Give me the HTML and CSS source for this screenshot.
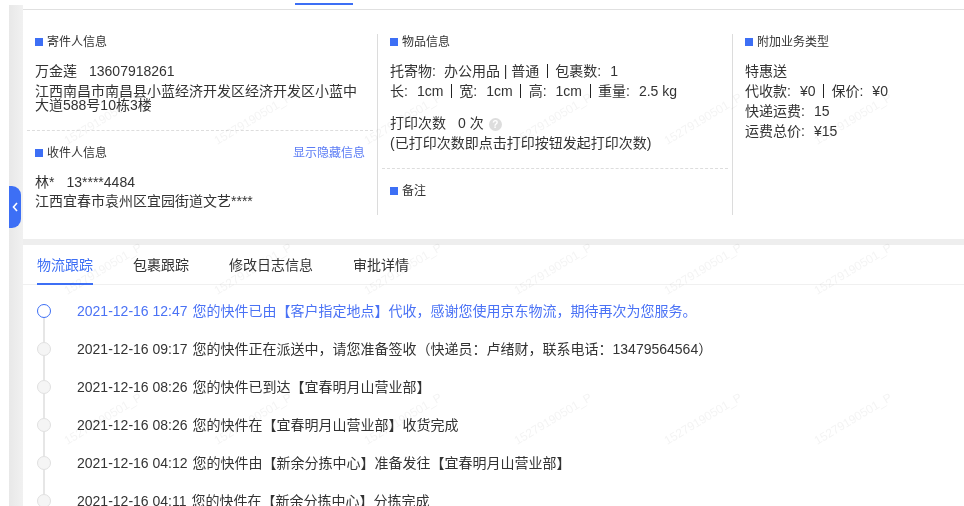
FILE: index.html
```html
<!DOCTYPE html>
<html lang="zh-CN">
<head>
    <meta charset="UTF-8">
    <meta name="viewport" content="width=device-width, initial-scale=1.0">
    <title>运单详情</title>
    <link rel="stylesheet" href="styles.css">
</head>
<body>
    <div class="page">
        <div class="gutter"></div>
        <div class="content">
            <div class="topbar"><span class="topbar-active"></span></div>

            <div class="info-card">
                <div class="info-grid">
                    <div class="col col-first">
                        <div class="title">寄件人信息</div>
                        <div class="row">万金莲<span class="phone">13607918261</span></div>
                        <div class="address">江西南昌市南昌县小蓝经济开发区经济开发区小蓝中大道588号10栋3楼</div>
                        <div class="dashed dashed-sender"></div>
                        <div class="title title-between">收件人信息<a class="link">显示隐藏信息</a></div>
                        <div class="row">林*<span class="phone">13****4484</span></div>
                        <div class="address address-receiver">江西宜春市袁州区宜园街道文艺****</div>
                    </div>
                    <div class="col">
                        <div class="title">物品信息</div>
                        <div class="row">托寄物:<span class="val val-first">办公用品 | 普通</span><i class="sep"></i>包裹数:<span class="val">1</span></div>
                        <div class="row">长:<span class="val">1cm</span><i class="sep"></i>宽:<span class="val">1cm</span><i class="sep"></i>高:<span class="val">1cm</span><i class="sep"></i>重量:<span class="val">2.5 kg</span></div>
                        <div class="row row-print">打印次数<span class="print-count">0 次</span><span class="help">?</span></div>
                        <div class="row">(已打印次数即点击打印按钮发起打印次数)</div>
                        <div class="dashed dashed-goods"></div>
                        <div class="title">备注</div>
                    </div>
                    <div class="col">
                        <div class="title">附加业务类型</div>
                        <div class="row">特惠送</div>
                        <div class="row">代收款:<span class="val">¥0</span><i class="sep"></i>保价:<span class="val">¥0</span></div>
                        <div class="row">快递运费:<span class="val">15</span></div>
                        <div class="row">运费总价:<span class="val">¥15</span></div>
                    </div>
                </div>
            </div>

            <div class="track-card">
                <div class="tabs">
                    <div class="tab active">物流跟踪</div>
                    <div class="tab">包裹跟踪</div>
                    <div class="tab">修改日志信息</div>
                    <div class="tab">审批详情</div>
                </div>
                <div class="timeline">
                    <div class="step current"><span class="dot"></span><span class="msg"><span class="time">2021-12-16 12:47</span>您的快件已由【客户指定地点】代收，感谢您使用京东物流，期待再次为您服务。</span></div>
                    <div class="step"><span class="dot"></span><span class="msg"><span class="time">2021-12-16 09:17</span>您的快件正在派送中，请您准备签收（快递员：卢绪财，联系电话：13479564564）</span></div>
                    <div class="step"><span class="dot"></span><span class="msg"><span class="time">2021-12-16 08:26</span>您的快件已到达【宜春明月山营业部】</span></div>
                    <div class="step"><span class="dot"></span><span class="msg"><span class="time">2021-12-16 08:26</span>您的快件在【宜春明月山营业部】收货完成</span></div>
                    <div class="step"><span class="dot"></span><span class="msg"><span class="time">2021-12-16 04:12</span>您的快件由【新余分拣中心】准备发往【宜春明月山营业部】</span></div>
                    <div class="step"><span class="dot"></span><span class="msg"><span class="time">2021-12-16 04:11</span>您的快件在【新余分拣中心】分拣完成</span></div>
                </div>
            </div>
        </div>
    </div>

    <div class="collapse">
        <svg width="8" height="12" viewBox="0 0 8 12"><path d="M6 2 L2.5 6 L6 10" fill="none" stroke="#fff" stroke-width="1.6"/></svg>
    </div>

    <div class="watermarks">
        <span>15279190501_P</span><span>15279190501_P</span><span>15279190501_P</span><span>15279190501_P</span><span>15279190501_P</span><span>15279190501_P</span>
        <span>15279190501_P</span><span>15279190501_P</span><span>15279190501_P</span><span>15279190501_P</span><span>15279190501_P</span><span>15279190501_P</span>
        <span>15279190501_P</span><span>15279190501_P</span><span>15279190501_P</span><span>15279190501_P</span><span>15279190501_P</span><span>15279190501_P</span>
    </div>
</body>
</html>
```

FILE: styles.css
```css
* {
    margin: 0;
    padding: 0;
    box-sizing: border-box;
}
html, body {
    height: 506px;
    overflow: hidden;
    background: #fff;
}
body {
    position: relative;
    font-family: "Liberation Sans", "Noto Sans CJK SC", sans-serif;
    font-size: 14px;
    color: #333;
}
.page {
    display: flex;
    height: 506px;
    padding-left: 9px;
}
.gutter {
    width: 14px;
    margin-top: 5px;
    background: linear-gradient(to right, #e8e8e8, #f1f1f1);
}
.content {
    flex: 1;
    min-width: 0;
    background: #eee;
}
.topbar {
    height: 10px;
    padding: 3px 0 0 272px;
    background: #fff;
    border-bottom: 1px solid #e0e0e0;
}
.topbar-active {
    display: block;
    width: 58px;
    height: 2px;
    background: #3d6ff5;
}
.info-card {
    height: 229px;
    padding-top: 24px;
    background: #fff;
}
.info-grid {
    display: grid;
    grid-template-columns: 354px 355px 1fr;
    height: 181px;
}
.col {
    padding: 0 4px 0 12px;
    border-left: 1px solid #dcdcdc;
}
.col-first {
    border-left: none;
}
.title {
    position: relative;
    padding-left: 12px;
    margin-bottom: 11px;
    font-size: 12px;
    line-height: 16px;
}
.title::before {
    content: "";
    position: absolute;
    left: 0;
    top: 4px;
    width: 8px;
    height: 8px;
    background: #3d6ff5;
}
.title-between {
    display: flex;
    justify-content: space-between;
    padding-right: 8px;
}
.link {
    color: #5b7cf5;
}
.row {
    line-height: 20px;
    white-space: nowrap;
}
.phone {
    margin-left: 12px;
}
.address {
    margin-top: 3px;
    line-height: 14px;
    margin-right: 16px;
}
.address-receiver {
    margin-top: 2px;
}
.val {
    margin-left: 9px;
}
.val-first {
    margin-left: 8px;
}
.sep {
    display: inline-block;
    width: 1px;
    height: 14px;
    margin: 0 7.5px;
    background: #222;
    vertical-align: -2px;
}
.row-print {
    margin-top: 12px;
}
.print-count {
    margin-left: 12px;
}
.help {
    display: inline-block;
    width: 13px;
    height: 13px;
    margin-left: 5px;
    border-radius: 50%;
    background: #ddd;
    color: #fff;
    font-size: 10px;
    font-weight: bold;
    line-height: 13px;
    text-align: center;
}
.dashed {
    margin-left: -8px;
    border-top: 1px dashed #ddd;
}
.dashed-sender {
    margin-top: 18px;
    margin-bottom: 14px;
}
.dashed-goods {
    margin-top: 15px;
    margin-bottom: 14px;
}
.track-card {
    height: 261px;
    margin-top: 6px;
    background: #fff;
}
.tabs {
    display: flex;
    gap: 40px;
    height: 40px;
    padding-left: 14px;
    border-bottom: 1px solid #f0f0f0;
}
.tab {
    height: 40px;
    line-height: 40px;
}
.tab.active {
    color: #3d6ff5;
    border-bottom: 2px solid #3d6ff5;
}
.timeline {
    padding: 7px 0 0 14px;
}
.step {
    position: relative;
    display: flex;
    align-items: center;
    height: 38px;
    white-space: nowrap;
}
.step::after {
    content: "";
    position: absolute;
    left: 6px;
    top: 26px;
    width: 2px;
    height: 24px;
    background: #e6e6e6;
}
.dot {
    flex: none;
    width: 14px;
    height: 14px;
    margin-right: 26px;
    border: 1px solid #e0e0e0;
    border-radius: 50%;
    background: #f5f5f5;
}
.msg {
    margin-bottom: 2px;
}
.time {
    margin-right: 5px;
}
.current {
    color: #4a72f5;
}
.current .dot {
    border: 1.5px solid #3d6ff5;
    background: #fff;
}
.collapse {
    position: absolute;
    left: 9px;
    top: 186px;
    display: flex;
    align-items: center;
    justify-content: center;
    width: 12px;
    height: 42px;
    border-radius: 0 9px 9px 0;
    background: #3d6ff5;
}
.watermarks {
    position: absolute;
    left: 28px;
    top: 44px;
    display: grid;
    grid-template-columns: repeat(6, 150px);
    grid-auto-rows: 150px;
    pointer-events: none;
    mix-blend-mode: multiply;
}
.watermarks span {
    display: flex;
    align-items: center;
    justify-content: center;
    font-size: 12px;
    color: #f4f4f4;
    transform: rotate(-31deg);
}
```
